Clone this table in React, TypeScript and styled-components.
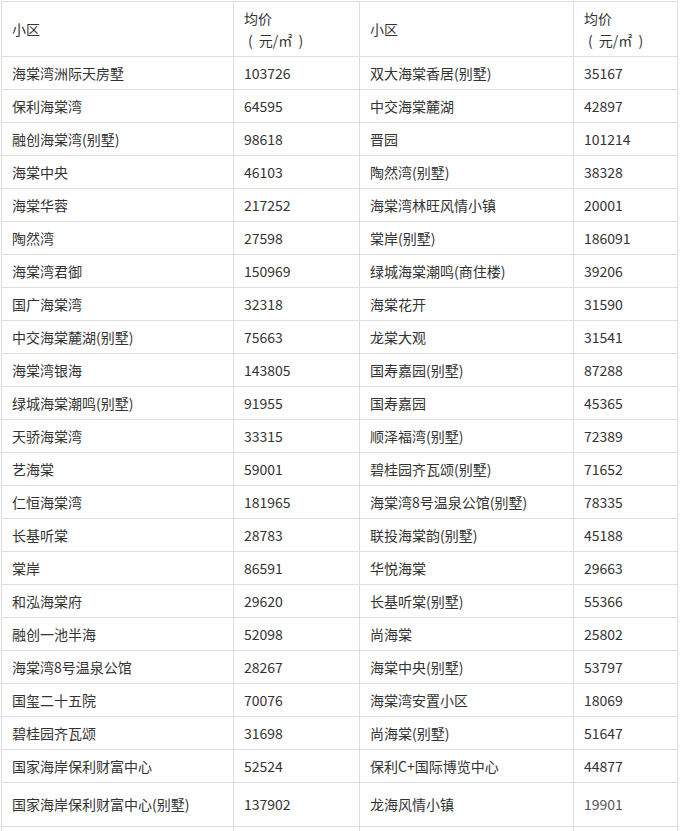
import React from "react";
import styled, { createGlobalStyle } from "styled-components";

const GlobalStyle = createGlobalStyle`
  html, body {
    margin: 0;
    padding: 0;
    background: #fff;
  }
  body {
    font-family: "Microsoft YaHei", "Noto Sans CJK SC", "Noto Sans", sans-serif;
    color: #333;
  }
`;

const Wrapper = styled.div`
  padding: 1px 0 0 1px;
`;

const Table = styled.table`
  border-collapse: collapse;
  table-layout: fixed;
  width: 676px;
  font-size: 14px;
  line-height: 22px;
`;

const Cell = styled.td<{ $tall?: boolean; $muted?: boolean }>`
  border: 1px solid #dddddd;
  padding: ${(p) => (p.$tall ? "10px 10px 11px" : "5px 10px")};
  vertical-align: middle;
  text-align: left;
  color: ${(p) => (p.$muted ? "#555" : "#333")};
  white-space: nowrap;
  overflow: hidden;
`;

const HeadCell = styled(Cell).attrs({ as: "th" })`
  font-weight: normal;
`;

const Unit = styled.span`
  display: inline-block;
  padding-left: 4px;
  word-spacing: 3px;
`;

type Row = [string, string, string, string];

// 海棠湾小区均价
const rows: Row[] = [
  ["海棠湾洲际天房墅", "103726", "双大海棠香居(别墅)", "35167"],
  ["保利海棠湾", "64595", "中交海棠麓湖", "42897"],
  ["融创海棠湾(别墅)", "98618", "晋园", "101214"],
  ["海棠中央", "46103", "陶然湾(别墅)", "38328"],
  ["海棠华蓉", "217252", "海棠湾林旺风情小镇", "20001"],
  ["陶然湾", "27598", "棠岸(别墅)", "186091"],
  ["海棠湾君御", "150969", "绿城海棠潮鸣(商住楼)", "39206"],
  ["国广海棠湾", "32318", "海棠花开", "31590"],
  ["中交海棠麓湖(别墅)", "75663", "龙棠大观", "31541"],
  ["海棠湾银海", "143805", "国寿嘉园(别墅)", "87288"],
  ["绿城海棠潮鸣(别墅)", "91955", "国寿嘉园", "45365"],
  ["天骄海棠湾", "33315", "顺泽福湾(别墅)", "72389"],
  ["艺海棠", "59001", "碧桂园齐瓦颂(别墅)", "71652"],
  ["仁恒海棠湾", "181965", "海棠湾8号温泉公馆(别墅)", "78335"],
  ["长基听棠", "28783", "联投海棠韵(别墅)", "45188"],
  ["棠岸", "86591", "华悦海棠", "29663"],
  ["和泓海棠府", "29620", "长基听棠(别墅)", "55366"],
  ["融创一池半海", "52098", "尚海棠", "25802"],
  ["海棠湾8号温泉公馆", "28267", "海棠中央(别墅)", "53797"],
  ["国玺二十五院", "70076", "海棠湾安置小区", "18069"],
  ["碧桂园齐瓦颂", "31698", "尚海棠(别墅)", "51647"],
  ["国家海岸保利财富中心", "52524", "保利C+国际博览中心", "44877"],
];

const PriceHead = () => (
  <HeadCell>
    均价
    <br />
    <Unit>( 元/㎡ )</Unit>
  </HeadCell>
);

const App = () => {
  return (
    <Wrapper>
      <GlobalStyle />
      <Table>
        <colgroup>
          <col style={{ width: 232 }} />
          <col style={{ width: 126 }} />
          <col style={{ width: 214 }} />
          <col style={{ width: 104 }} />
        </colgroup>
        <thead>
          <tr>
            <HeadCell>小区</HeadCell>
            <PriceHead />
            <HeadCell>小区</HeadCell>
            <PriceHead />
          </tr>
        </thead>
        <tbody>
          {rows.map((r) => (
            <tr key={r[0]}>
              <Cell>{r[0]}</Cell>
              <Cell>{r[1]}</Cell>
              <Cell>{r[2]}</Cell>
              <Cell>{r[3]}</Cell>
            </tr>
          ))}
          <tr>
            <Cell $tall>国家海岸保利财富中心(别墅)</Cell>
            <Cell $tall>137902</Cell>
            <Cell $tall>龙海风情小镇</Cell>
            <Cell $tall $muted>
              19901
            </Cell>
          </tr>
          <tr>
            <Cell>&nbsp;</Cell>
            <Cell>&nbsp;</Cell>
            <Cell>&nbsp;</Cell>
            <Cell>&nbsp;</Cell>
          </tr>
        </tbody>
      </Table>
    </Wrapper>
  );
};

export default App;
